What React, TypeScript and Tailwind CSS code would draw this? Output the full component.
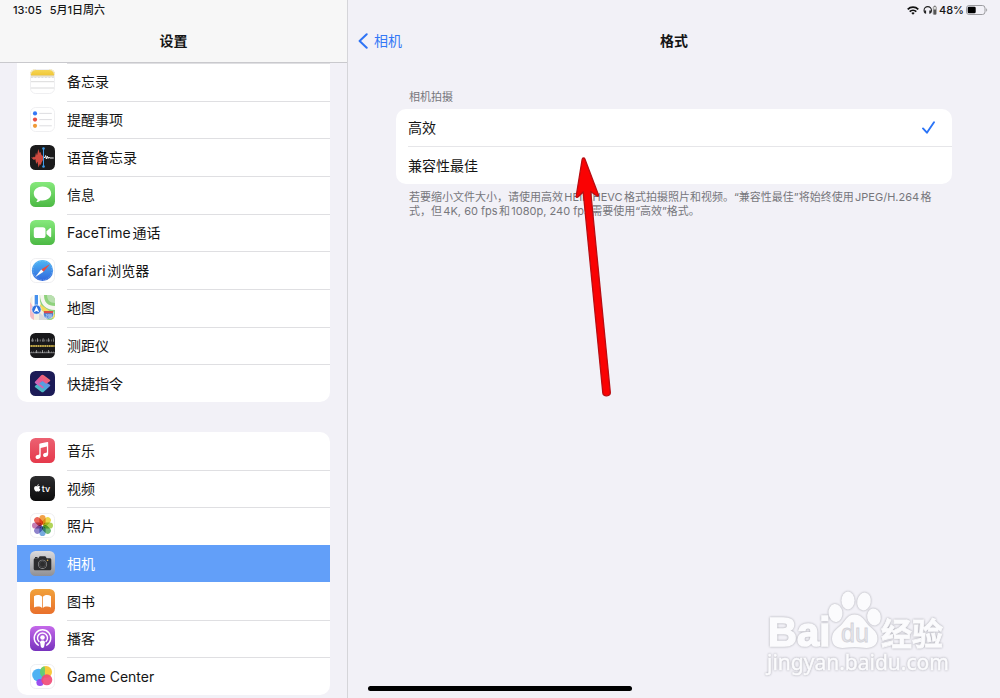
import { useState } from "react";
import type { ReactNode } from "react";
import { FaApple } from "react-icons/fa";

type AppItem = { id: string; label: string; icon: ReactNode };

function Tile({ fill, outline, children }: { fill: string; outline?: boolean; children?: ReactNode }) {
  return (
    <svg viewBox="0 0 25 25" className="size-[25px] shrink-0" aria-hidden="true">
      <defs>
        <clipPath id="tile">
          <rect width="25" height="25" rx="5.5" />
        </clipPath>
        <linearGradient id="green" x1="0" y1="0" x2="0" y2="1">
          <stop offset="0" stopColor="#86e97c" />
          <stop offset="1" stopColor="#4cb944" />
        </linearGradient>
        <linearGradient id="yellow" x1="0" y1="0" x2="0" y2="1">
          <stop offset="0" stopColor="#f7d95c" />
          <stop offset="1" stopColor="#f0c634" />
        </linearGradient>
        <linearGradient id="blue" x1="0" y1="0" x2="0" y2="1">
          <stop offset="0" stopColor="#4fb7f5" />
          <stop offset="1" stopColor="#2f65dc" />
        </linearGradient>
        <linearGradient id="red" x1="0" y1="0" x2="0" y2="1">
          <stop offset="0" stopColor="#ec6172" />
          <stop offset="1" stopColor="#e5394b" />
        </linearGradient>
        <linearGradient id="black" x1="0" y1="0" x2="0" y2="1">
          <stop offset="0" stopColor="#2c2c2e" />
          <stop offset="1" stopColor="#0c0c0d" />
        </linearGradient>
        <linearGradient id="silver" x1="0" y1="0" x2="0" y2="1">
          <stop offset="0" stopColor="#dcdbdd" />
          <stop offset="1" stopColor="#8f8f94" />
        </linearGradient>
        <linearGradient id="orange" x1="0" y1="0" x2="0" y2="1">
          <stop offset="0" stopColor="#f1a23b" />
          <stop offset="1" stopColor="#e9702c" />
        </linearGradient>
        <linearGradient id="purple" x1="0" y1="0" x2="0" y2="1">
          <stop offset="0" stopColor="#c569ea" />
          <stop offset="1" stopColor="#7732bd" />
        </linearGradient>
        <linearGradient id="pinkOrange" x1="1" y1="0" x2="0" y2="1">
          <stop offset="0" stopColor="#f0745c" />
          <stop offset="0.5" stopColor="#e8568d" />
          <stop offset="1" stopColor="#a978e8" />
        </linearGradient>
        <linearGradient id="tealBlue" x1="0" y1="1" x2="1" y2="0">
          <stop offset="0" stopColor="#4fd0a0" />
          <stop offset="0.5" stopColor="#4aa8dc" />
          <stop offset="1" stopColor="#7f7fe8" />
        </linearGradient>
      </defs>
      <g clipPath="url(#tile)">
        <rect width="25" height="25" fill={fill} />
        {children}
      </g>
      {outline && <rect x="0.5" y="0.5" width="24" height="24" rx="5.2" fill="none" stroke="#efeff1" />}
    </svg>
  );
}

const petals = ["#f19a38", "#e9d43a", "#a9cf4b", "#67b56b", "#6aa3dc", "#8579c8", "#c070ad", "#e8584a"];

const utilities: AppItem[] = [
  {
    id: "notes",
    label: "备忘录",
    icon: (
      <Tile fill="#fff" outline>
        <rect width="25" height="6.5" fill="url(#yellow)" />
        <path d="M0 7h25" stroke="#c9b98a" strokeWidth="0.8" />
        <path d="M1 8.5h23" stroke="#b9b9bb" strokeWidth="0.7" strokeDasharray="0.7 0.7" />
        <path d="M0 12.7h25M0 19h25" stroke="#cfcfd1" strokeWidth="0.8" />
      </Tile>
    ),
  },
  {
    id: "reminders",
    label: "提醒事项",
    icon: (
      <Tile fill="#fff" outline>
        <circle cx="5" cy="6.4" r="2.1" fill="#3478f6" />
        <circle cx="5" cy="12.6" r="2.1" fill="#e84f45" />
        <circle cx="5" cy="18.8" r="2.1" fill="#f09a37" />
        <path d="M9.3 6.4h12.5M9.3 12.6h12.5M9.3 18.8h12.5" stroke="#d9d9dc" strokeWidth="0.9" />
      </Tile>
    ),
  },
  {
    id: "voice-memos",
    label: "语音备忘录",
    icon: (
      <Tile fill="#1b1b1c">
        <path d="M1 12.5h2l1-1 1 1 1-5 1 3 1.3-6.5 1.4 4 .8-1 1 3 1.5 1v4l-1.2 2-1 3-.9-1-1.3 3.5-1.2-6-1.2 2.5-.9-5-1.3 1z" fill="#cf4a40" />
        <path d="M14 12.5h1l.6-2 .8 3.5.9-3 .8 2.5.8-1.5.8 1h4" fill="none" stroke="#eee" strokeWidth="1" />
        <path d="M13.5 3v19" stroke="#3f9be8" strokeWidth="1" />
        <circle cx="13.5" cy="3.5" r="1.3" fill="#3f9be8" />
        <circle cx="13.5" cy="21.5" r="1.3" fill="#3f9be8" />
      </Tile>
    ),
  },
  {
    id: "messages",
    label: "信息",
    icon: (
      <Tile fill="url(#green)">
        <path d="M12.5 4.600c-4.900 0-8.700 3.100-8.700 7 0 2.500 1.500 4.600 3.800 5.900-.1 1-.6 1.800-1.300 2.600 1.600-.1 2.900-.8 3.900-1.700.7.1 1.500.2 2.300.2 4.900 0 8.700-3.100 8.700-7s-3.800-7-8.700-7z" fill="#fff" />
      </Tile>
    ),
  },
  {
    id: "facetime",
    label: "FaceTime通话",
    icon: (
      <Tile fill="url(#green)">
        <rect x="3.8" y="7.2" width="11.7" height="10.8" rx="2.6" fill="#fff" />
        <path d="M16.5 11.2l3.400-2.900c.6-.5 1.300-.2 1.300.6v7.400c0 .8-.7 1.100-1.300.6l-3.400-2.900z" fill="#fff" />
      </Tile>
    ),
  },
  {
    id: "safari",
    label: "Safari浏览器",
    icon: (
      <Tile fill="#fff" outline>
        <circle cx="12.5" cy="12.5" r="10.6" fill="url(#blue)" />
        <circle cx="12.5" cy="12.5" r="9.5" fill="none" stroke="#a9d2f7" strokeWidth="0.8" strokeDasharray="0.5 1.2" />
        <path d="M20 6l-6.400 7.800-2.400-2.400z" fill="#e84c40" />
        <path d="M5 19.200l6.200-7.800 2.400 2.400z" fill="#fff" />
      </Tile>
    ),
  },
  {
    id: "maps",
    label: "地图",
    icon: (
      <Tile fill="#f4efe1">
        <path d="M8 0h17v25h-9z" fill="#8fd27d" />
        <path d="M0 7l4 6v12H0z" fill="#f4bdc6" />
        <path d="M12 0c0 8 5 13 13 13" fill="none" stroke="#f7f6f1" strokeWidth="4" />
        <path d="M17 0c0 5 3 8 8 8V0z" fill="#b9dfb0" />
        <path d="M9 11l17 12" stroke="#f5d95c" strokeWidth="4" />
        <path d="M9 17l9 8H9z" fill="#d9dadc" />
        <path d="M2.5 0h2.200v12H2.500zM8 0h1.800v13H8z" fill="#fff" />
        <path d="M4.700 0H8v13H4.700z" fill="#4791ed" />
        <circle cx="6.5" cy="14.6" r="4.7" fill="#2f72de" stroke="#fff" strokeWidth="0.7" />
        <path d="M6.500 11.200l2.700 6-2.700-1.300-2.700 1.300z" fill="#fff" />
        <path d="M13.500 17.500h10v2c0 2.500-2 4-5 4.500-3-.5-5-2-5-4.500z" fill="#4b83d4" stroke="#fff" strokeWidth="0.5" />
        <path d="M14 16h9v2.200h-9z" fill="#dc4d4b" />
        <path d="M15.800 19.500h1.400v1.500h-1.200v1.500h1.400M18.300 19.500h1.200v3h-1.200zM20.500 19.500h1.100v3h-1.100z" fill="none" stroke="#dfe9f8" strokeWidth="0.5" />
      </Tile>
    ),
  },
  {
    id: "measure",
    label: "测距仪",
    icon: (
      <Tile fill="#18181a">
        <path d="M1.500 7.500h22" stroke="#a5a5a7" strokeWidth="2" strokeDasharray="0.5 1.3" />
        <path d="M2 7h22" stroke="#d0d0d0" strokeWidth="3.400" strokeDasharray="0.6 4.8" />
        <path d="M0 13h25" stroke="#dcb93a" strokeWidth="1" />
        <path d="M1 13h23" stroke="#f0d465" strokeWidth="1.8" strokeDasharray="0.6 1.2" />
        <path d="M1.500 19h22" stroke="#8a8a8c" strokeWidth="1.400" strokeDasharray="0.5 1.3" />
        <path d="M0 19.700h25" stroke="#b8b8ba" strokeWidth="0.6" />
        <path d="M6 18.500h14" stroke="#d0d0d0" strokeWidth="2.800" strokeDasharray="0.6 5.6" />
      </Tile>
    ),
  },
  {
    id: "shortcuts",
    label: "快捷指令",
    icon: (
      <Tile fill="#1c1b57">
        <path d="M12.500 9.500l7 4c1 .6 1 1.400 0 2l-5.700 5.200c-.9.7-1.700.7-2.600 0l-5.700-4.200c-1-.7-1-1.400 0-2.100z" fill="url(#tealBlue)" />
        <path d="M11.200 4.200c.9-.7 1.700-.7 2.600 0l5.700 4.200c1 .7 1 1.400 0 2.100l-3.200 2.200-3.800-2.700-3.400 2.500 5 3.700-1.600 1.200-7-5c-1-.7-1-1.400 0-2.100z" fill="url(#pinkOrange)" />
      </Tile>
    ),
  },
];

const media: AppItem[] = [
  {
    id: "music",
    label: "音乐",
    icon: (
      <Tile fill="url(#red)">
        <path d="M9.300 6.300c0-.5.3-.8.8-.9l7.200-1.500c.6-.1.9.1.9.7v11.100c0 1.800-1 2.900-2.600 3.200-1.500.3-2.500-.5-2.500-1.700 0-1.100.7-1.800 1.900-2.100l1.200-.3c.5-.1.7-.4.7-.8V8.600l-6.200 1.300v7.800c0 1.800-1 2.900-2.600 3.200-1.500.3-2.500-.5-2.500-1.700 0-1.100.7-1.800 1.900-2.100l1.200-.3c.4-.1.6-.4.6-.8z" fill="#fff" />
      </Tile>
    ),
  },
  {
    id: "tv",
    label: "视频",
    icon: (
      <Tile fill="url(#black)">
        <FaApple x="3" y="7.6" size={8.5} color="#fff" />
        <text x="11.8" y="16" fontSize="9" fontFamily="Inter, sans-serif" fontWeight="500" fill="#fff">tv</text>
      </Tile>
    ),
  },
  {
    id: "photos",
    label: "照片",
    icon: (
      <Tile fill="#fff" outline>
        {petals.map((color, i) => (
          <rect key={color} className="mix-blend-multiply" x="9.4" y="2" width="6.2" height="9.8" rx="3.1" fill={color} fillOpacity="0.92" transform={`rotate(${i * 45} 12.5 12.5)`} />
        ))}
      </Tile>
    ),
  },
  {
    id: "camera",
    label: "相机",
    icon: (
      <Tile fill="url(#silver)">
        <path d="M5.200 7.200h3.100l1-1.500c.3-.4.6-.5 1-.5h4.400c.5 0 .8.1 1 .5l1 1.500h3.100c.9 0 1.500.6 1.500 1.500v9c0 .9-.6 1.500-1.500 1.500H5.200c-.9 0-1.500-.6-1.500-1.500v-9c0-.9.6-1.500 1.500-1.500z" fill="#2c2c2e" />
        <path d="M5 6h2.500v1.200H5z" fill="#2c2c2e" />
        <circle cx="12.5" cy="13.2" r="4.5" fill="#a9a9ab" />
        <circle cx="12.5" cy="13.2" r="3.9" fill="#2c2c2e" />
        <circle cx="12.5" cy="13.2" r="3" fill="none" stroke="#5c5c5f" strokeWidth="0.5" />
        <circle cx="17.6" cy="9.2" r="0.8" fill="#edb646" />
      </Tile>
    ),
  },
  {
    id: "books",
    label: "图书",
    icon: (
      <Tile fill="url(#orange)">
        <path d="M12.100 7.700C11 6.500 9.700 6 8 6c-1.500 0-2.900.4-4 1.200v11.300c1.200-.7 2.500-1 4-1 1.600 0 3 .5 4.100 1.400zM12.900 7.700C14 6.500 15.300 6 17 6c1.500 0 2.900.4 4 1.200v11.300c-1.200-.7-2.500-1-4-1-1.600 0-3 .5-4.100 1.400z" fill="#fff" />
      </Tile>
    ),
  },
  {
    id: "podcasts",
    label: "播客",
    icon: (
      <Tile fill="url(#purple)">
        <g fill="none" stroke="#fff" strokeLinecap="round">
          <path d="M8.300 19.200a8.300 8.300 0 1 1 8.400 0" strokeWidth="1.4" />
          <path d="M9 15.600a5 5 0 1 1 7 0" strokeWidth="1.4" />
        </g>
        <circle cx="12.5" cy="11.5" r="2.3" fill="#fff" />
        <path d="M10.100 16.200c0-1 .9-1.600 2.400-1.600s2.400.6 2.400 1.600l-.7 4.400c-.2.9-.8 1.300-1.700 1.300s-1.500-.4-1.700-1.300z" fill="#fff" />
      </Tile>
    ),
  },
  {
    id: "game-center",
    label: "Game Center",
    icon: (
      <Tile fill="#fff" outline>
        <circle cx="16" cy="8" r="6" fill="#f7c83c" />
        <circle cx="8.5" cy="11" r="6.3" fill="#46aef2" fillOpacity="0.95" />
        <circle cx="10" cy="18.5" r="3.6" fill="#9547ee" fillOpacity="0.95" />
        <path d="M10 8a6 6 0 0 1 4.400-5.800c1 2 1 7-1 11.300A6 6 0 0 1 10 8z" fill="#62cf6c" fillOpacity="0.9" />
        <circle cx="16.8" cy="15.8" r="5.5" fill="#f04875" fillOpacity="0.9" />
      </Tile>
    ),
  },
];

function AppGroup({ items, selected, continued, onSelect }: { items: AppItem[]; selected: string; continued?: boolean; onSelect: (id: string) => void }) {
  const selectedIndex = items.findIndex((item) => item.id === selected);
  return (
    <ul className={`grid auto-rows-fr overflow-hidden bg-white ${continued ? "min-h-[339px] rounded-b-[10px]" : "min-h-[263px] rounded-[10px]"}`}>
      {items.map((item, i) => {
        const active = i === selectedIndex;
        const plain = (i === 0 && !continued) || active || (selectedIndex >= 0 && i === selectedIndex + 1);
        return (
          <li key={item.id} className="grid">
            <button
              type="button"
              onClick={() => onSelect(item.id)}
              className={`flex items-center gap-3 pl-[13px] text-left ${active ? "bg-[#629ff9] text-white" : "text-[#151515]"}`}
            >
              {item.icon}
              <span className={`flex flex-1 items-center self-stretch border-t ${plain ? "border-transparent" : "border-[#dfdfe2]"}`}>{item.label}</span>
            </button>
          </li>
        );
      })}
    </ul>
  );
}

function StatusIcons() {
  return (
    <div className="flex items-center justify-end pr-3 text-[11px] font-medium">
      <svg viewBox="0 0 12 9" className="mr-1 h-[9px] w-3" aria-hidden="true" fill="none" stroke="#111" strokeWidth="1.7">
        <path d="M.7 3.400a7.500 7.500 0 0 1 10.600 0" />
        <path d="M2.700 5.700a4.700 4.700 0 0 1 6.600 0" />
        <path d="M4.300 7l1.700 1.800L7.700 7A2.500 2.500 0 0 0 4.300 7z" fill="#111" stroke="none" />
      </svg>
      <svg viewBox="0 0 14 10" className="mr-[2px] h-[10px] w-[14px]" aria-hidden="true">
        <path d="M2.200 8A3.700 3.700 0 1 1 7.300 8" fill="none" stroke="#222" strokeWidth="1.1" />
        <path d="M1.300 5.500h1.800v3.300H2.300zM6.300 5.500h1.900l-1 3.300h-.9z" fill="#222" />
        <rect x="10.3" y="1.5" width="3" height="8" rx="0.8" fill="#ddd" stroke="#777" strokeWidth="0.7" />
        <path d="M11 .7h1.600v.8H11zM10.600 4.500h2.400v4.700h-2.400z" fill="#555" />
      </svg>
      <span>48%</span>
      <svg viewBox="0 0 22 10" className="ml-[2px] h-[10px] w-[22px]" aria-hidden="true">
        <rect x="0.5" y="0.5" width="18.5" height="9" rx="2.6" fill="none" stroke="#9b9b9f" />
        <rect x="1.7" y="1.7" width="8" height="6.6" rx="1.4" fill="#000" />
        <path d="M20.200 3.300c1.300.4 1.300 3 0 3.400z" fill="#9b9b9f" />
      </svg>
    </div>
  );
}

function Watermark() {
  return (
    <svg viewBox="0 0 190 94" className="pointer-events-none absolute right-[50px] bottom-[18px] h-[94px] w-[190px]" aria-hidden="true">
      <g fill="#fbfbfd" className="[filter:drop-shadow(0_0_1px_#a4a4ac)]">
        <text x="8" y="60" fontSize="40" fontWeight="700" stroke="#fbfbfd" strokeWidth="1.6" fontFamily="Liberation Sans, Arial, sans-serif">Bai</text>
        <ellipse cx="75.5" cy="27" rx="7" ry="9" transform="rotate(-8 75.5 27)" />
        <ellipse cx="88" cy="14.5" rx="6.6" ry="9" />
        <ellipse cx="104" cy="15.5" rx="6.8" ry="9" transform="rotate(10 104 15.5)" />
        <ellipse cx="114" cy="31" rx="6.8" ry="8.6" transform="rotate(-10 114 31)" />
        <path d="M94.500 28.500c6 0 9 4 12.500 9s10.500 7 10.500 15c0 6-4.500 9.500-11 9.500-5 0-7-1-12-1s-7 1-12 1c-6.500 0-10.500-3.500-10.500-9.500 0-8 6.500-10 10.500-15s6-9 12-9z" />
        <text x="121" y="59" fontSize="31" fontWeight="700" stroke="#fbfbfd" strokeWidth="0.8" fontFamily="Noto Sans CJK SC, sans-serif">经验</text>
        <text x="7" y="84" fontSize="21" stroke="#fbfbfd" strokeWidth="0.5" fontFamily="Noto Sans, sans-serif">jingyan.baidu.com</text>
      </g>
      <text x="81" y="56" fontSize="25" fill="#e6e6eb" stroke="#d2d2d8" strokeWidth="0.8" fontFamily="Liberation Sans, Arial, sans-serif">du</text>
    </svg>
  );
}

function Arrow() {
  return (
    <svg viewBox="0 0 40 244" className="pointer-events-none absolute top-[155px] left-[572px] h-[244px] w-10" aria-hidden="true">
      <path
        d="M11.500 3c-.9 0-1.300.8-1.400 1.500L4.200 41c-.2 1.500 1 1.700 2 .8l5-4.800 19.600 201c.2 2.200 2 3 4 2.800s3.700-1.300 3.500-3.500L18.700 36.500l5.800 4.200c1.200.8 2.300.2 1.800-1.200L12.900 4c-.3-.7-.7-1-1.400-1z"
        fill="#fa0203"
        stroke="#b90d12"
        strokeWidth="1.3"
        strokeLinejoin="round"
      />
    </svg>
  );
}

const formats = [
  { id: "efficient", label: "高效" },
  { id: "compatible", label: "兼容性最佳" },
];

export default function App() {
  const [selected, setSelected] = useState("camera");
  const [format, setFormat] = useState("efficient");

  return (
    <div className="relative flex h-screen overflow-hidden bg-[#f2f1f7] font-['Inter','Noto_Sans_CJK_SC',sans-serif] text-[14px] leading-5 text-[#151515] [text-autospace:normal]">
      <aside className="flex w-[348px] shrink-0 flex-col border-r border-[#d5d5d9]">
        <header className="h-[63px] shrink-0 border-b border-[#c9c9cd] bg-[#f7f7f7]">
          <div className="flex h-5 items-center gap-2 pl-[13px] text-[11px] font-medium [text-autospace:no-autospace]">
            <span>13:05</span>
            <span>5月1日周六</span>
          </div>
          <h1 className="flex h-[42px] items-center justify-center font-bold">设置</h1>
        </header>
        <nav aria-label="设置" className="flex flex-col gap-[30px] px-[17px]">
          <AppGroup items={utilities} selected={selected} continued onSelect={setSelected} />
          <AppGroup items={media} selected={selected} onSelect={setSelected} />
        </nav>
      </aside>

      <main className="min-w-0 flex-1">
        <div className="grid h-5 items-center">
          <StatusIcons />
        </div>
        <header className="grid h-[42px] grid-cols-3 items-center">
          <a href="#camera" className="flex items-center gap-[6px] pl-[10px] text-[#3478f6]">
            <svg viewBox="0 0 10 16" className="h-4 w-[10px]" aria-hidden="true">
              <path d="M8.700 1.200L1.600 8l7.100 6.800" fill="none" stroke="#2f74f5" strokeWidth="2" strokeLinecap="round" strokeLinejoin="round" />
            </svg>
            相机
          </a>
          <h2 className="text-center font-bold">格式</h2>
        </header>

        <section role="radiogroup" aria-labelledby="format-heading" className="px-12 pt-[27px]">
          <h3 id="format-heading" className="pb-1 pl-[13px] text-[11px] leading-4 text-[#77777c]">相机拍摄</h3>
          <div className="overflow-hidden rounded-[10px] bg-white pl-3">
            {formats.map((option, i) => (
              <label key={option.id} className={`flex items-center justify-between pr-[17px] ${i > 0 ? "h-[38px] border-t border-[#e6e6e9]" : "h-[37px]"}`}>
                {option.label}
                <input type="radio" name="format" checked={format === option.id} onChange={() => setFormat(option.id)} className="peer ml-auto size-0 appearance-none" />
                <svg viewBox="0 0 13 13" className="hidden size-[13px] peer-checked:block" aria-hidden="true">
                  <path d="M1 7.400l3.900 4.300L12 1.200" fill="none" stroke="#2b74f7" strokeWidth="1.9" strokeLinecap="round" strokeLinejoin="round" />
                </svg>
              </label>
            ))}
          </div>
          <p className="pt-[6px] pr-3 pl-[13px] text-[11px] leading-[14px] text-[#77777c]">
            若要缩小文件大小，请使用高效HEIF/HEVC格式拍摄照片和视频。“兼容性最佳”将始终使用JPEG/H.264格式，但4K, 60 fps和1080p, 240 fps需要使用“高效”格式。
          </p>
        </section>
      </main>

      <Watermark />
      <Arrow />
      <div className="absolute bottom-[7px] left-1/2 h-[5px] w-[264px] -translate-x-1/2 rounded-full bg-black" />
    </div>
  );
}
